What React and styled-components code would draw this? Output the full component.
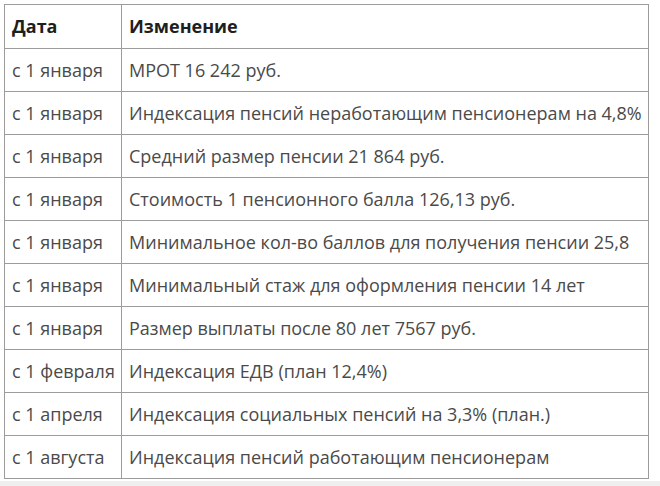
import React from "react";
import styled, { createGlobalStyle } from "styled-components";

const GlobalStyle = createGlobalStyle`
  html, body {
    margin: 0;
    padding: 0;
    background: #efefef;
  }
  body {
    font-family: "Open Sans", "Noto Sans", "Liberation Sans", sans-serif;
  }
`;

const rows = [
  ["с 1 января", "МРОТ 16 242 руб."],
  ["с 1 января", "Индексация пенсий неработающим пенсионерам на 4,8%"],
  ["с 1 января", "Средний размер пенсии 21 864 руб."],
  ["с 1 января", "Стоимость 1 пенсионного балла 126,13 руб."],
  ["с 1 января", "Минимальное кол-во баллов для получения пенсии 25,8"],
  ["с 1 января", "Минимальный стаж для оформления пенсии 14 лет"],
  ["с 1 января", "Размер выплаты после 80 лет 7567 руб."],
  ["с 1 февраля", "Индексация ЕДВ (план 12,4%)"],
  ["с 1 апреля", "Индексация социальных пенсий на 3,3% (план.)"],
  ["с 1 августа", "Индексация пенсий работающим пенсионерам"],
];

const Page = styled.div`
  background: #fff;
  height: 481px;
  padding: 4px 0 0 4px;
  box-sizing: border-box;
`;

const Table = styled.table`
  border-collapse: collapse;
  table-layout: fixed;
  width: 645px;
  border: 1px solid #9c9c9c;
`;

const HeadCell = styled.th`
  border: 1px solid #9c9c9c;
  padding: 9px 7px 10px;
  line-height: 24px;
  font-size: 18px;
  font-weight: 700;
  color: #1e1e1e;
  text-align: left;
  white-space: nowrap;
`;

const Cell = styled.td`
  border: 1px solid #9c9c9c;
  padding: 9px 7px 9px;
  line-height: 24px;
  font-size: 18px;
  color: #4a4a4a;
  white-space: nowrap;
  overflow: hidden;
`;

export default function App() {
  return (
    <>
      <GlobalStyle />
      <Page>
        <Table>
          <colgroup>
            <col style={{ width: 117 }} />
            <col />
          </colgroup>
          <thead>
            <tr>
              <HeadCell>Дата</HeadCell>
              <HeadCell>Изменение</HeadCell>
            </tr>
          </thead>
          <tbody>
            {rows.map(([date, change], i) => (
              <tr key={i}>
                <Cell>{date}</Cell>
                <Cell>{change}</Cell>
              </tr>
            ))}
          </tbody>
        </Table>
      </Page>
    </>
  );
}
